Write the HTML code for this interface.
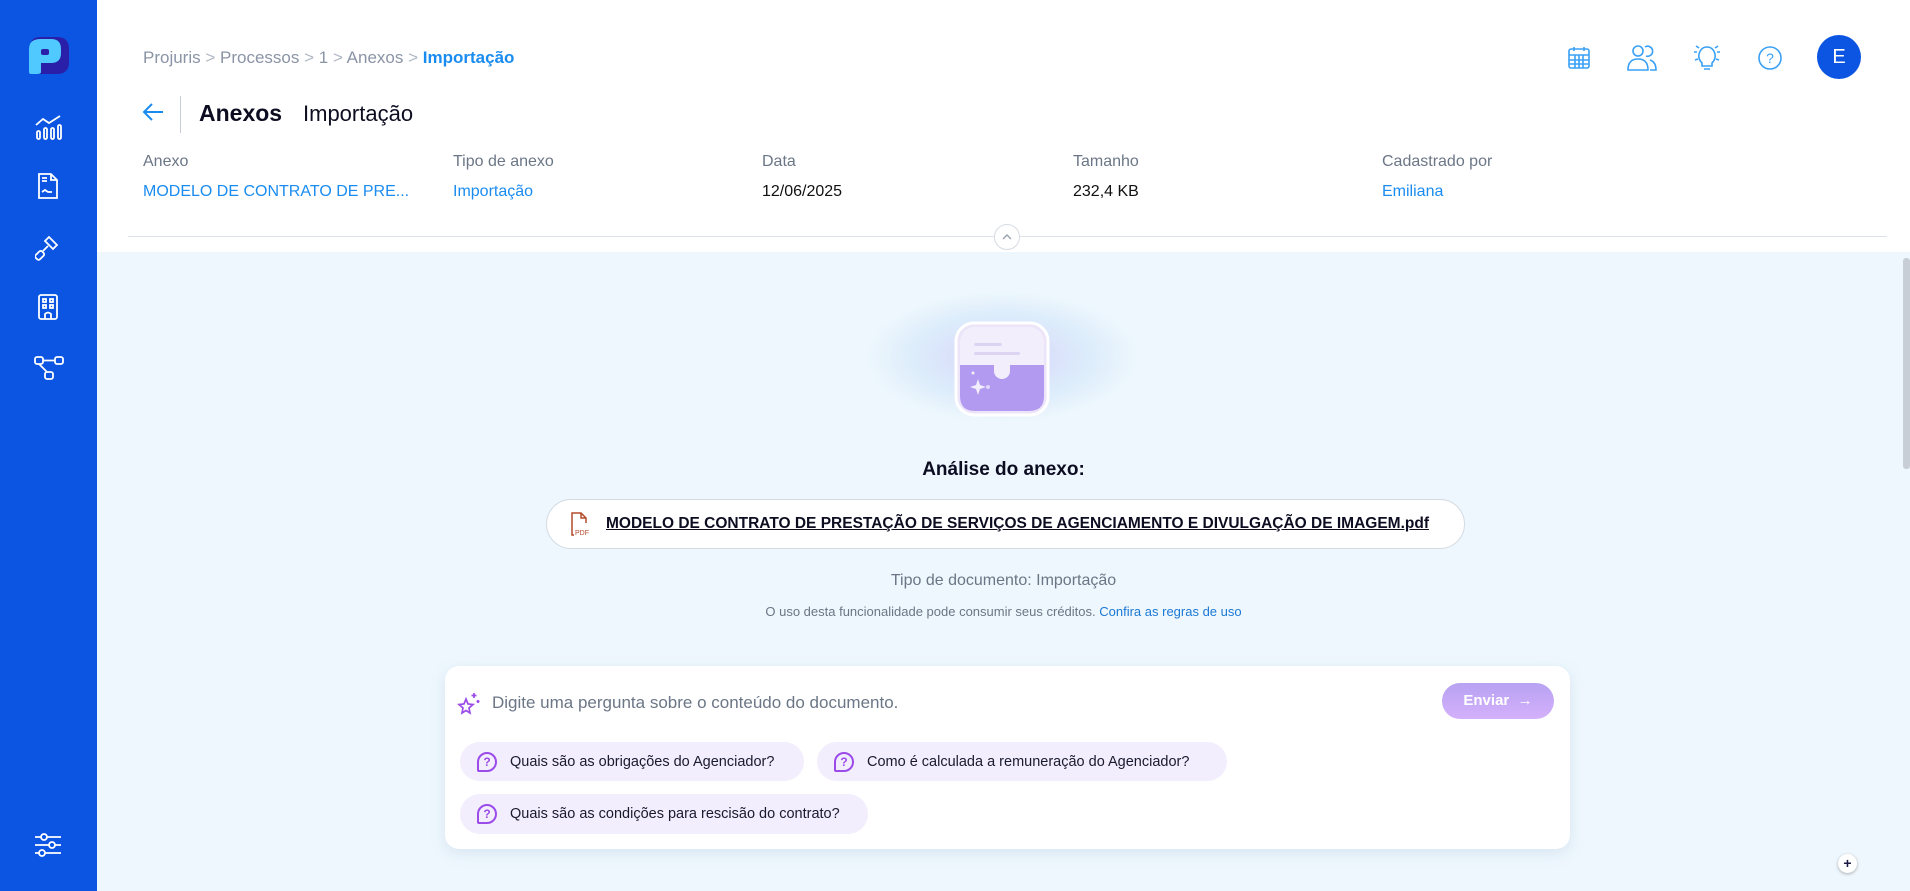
<!DOCTYPE html>
<html><head><meta charset="utf-8">
<style>
*{box-sizing:border-box;margin:0;padding:0}
body{width:1910px;height:891px;overflow:hidden;background:#fff;font-family:"Liberation Sans",sans-serif;position:relative;color:#1a1a2e}
.abs{position:absolute}
.side{left:0;top:0;width:97px;height:891px;background:#0b55e2}
.side svg{position:absolute;left:34px}
.bc{left:143px;top:48px;font-size:17px;color:#8a94a6;white-space:nowrap}
.bc b{color:#1a8cf0;font-weight:bold}
.lbl{top:153px;font-size:16px;color:#6b7686}
.val{top:183px;font-size:16px;color:#111}
.blue{color:#1a8cf0}
.main{left:97px;top:252px;width:1813px;height:639px;background:#eef7fd}
.chip{background:#f2eefd;border-radius:20px;font-size:14.5px;color:#1a1a2e;display:flex;align-items:center;padding-left:50px;white-space:nowrap}
.chip::before{content:"?";position:absolute;left:17px;top:50%;margin-top:-10px;width:16px;height:16px;border:2px solid #9b4be8;border-radius:50% 50% 50% 10%;color:#9b4be8;font-size:12px;font-weight:bold;line-height:16px;text-align:center}
</style></head><body>
<div class="abs side">
 <svg style="left:27px;top:37px" width="44" height="37" viewBox="0 0 44 37"><path d="M4 8 Q4 0 14 0 H30 Q42 0 42 12 V25 Q42 37 30 37 H4 Z" fill="#2a1fa8"/><path d="M2 35 V12 Q2 2 14 2 H24 Q34 2 34 12 V16 Q34 26 24 26 H14 V35 Q14 37 10 37 H4 Q2 37 2 35Z" fill="#4fc9ff"/><rect x="14" y="12" width="8" height="6" rx="2" fill="#2a1fa8"/></svg>
 <svg style="top:115px" width="30" height="26" viewBox="0 0 30 26" fill="none" stroke="#fff" stroke-width="1.8"><path d="M2 10 L9 4 L15 8 L26 1"/><rect x="3" y="16" width="3" height="8" rx="1.5"/><rect x="10" y="13" width="3" height="11" rx="1.5"/><rect x="17" y="13" width="3" height="11" rx="1.5"/><rect x="24" y="10" width="3" height="14" rx="1.5"/></svg>
 <svg style="top:172px;left:37px" width="22" height="28" viewBox="0 0 22 28" fill="none" stroke="#fff" stroke-width="1.8"><path d="M2 2 H14 L20 8 V26 H2 Z"/><path d="M14 2 V8 H20"/><path d="M5 6 H10 M5 9 H10 M5 20 L8 18 L11 20 L15 20"/></svg>
 <svg style="top:233px;left:35px" width="28" height="28" viewBox="0 0 28 28" fill="none" stroke="#fff" stroke-width="1.8"><path d="M14 4 L22 12 L18 16 L10 8 Z"/><path d="M13 13 L8 18"/><rect x="2" y="18" width="6" height="9" rx="2" transform="rotate(45 5 22)"/></svg>
 <svg style="top:293px;left:37px" width="22" height="28" viewBox="0 0 22 28" fill="none" stroke="#fff" stroke-width="1.8"><rect x="2" y="2" width="18" height="24" rx="2"/><rect x="6" y="6" width="3" height="3"/><rect x="13" y="6" width="3" height="3"/><rect x="6" y="12" width="3" height="3"/><rect x="13" y="12" width="3" height="3"/><path d="M8 26 V21 Q11 18 14 21 V26"/></svg>
 <svg style="top:355px" width="30" height="26" viewBox="0 0 30 26" fill="none" stroke="#fff" stroke-width="1.8"><rect x="1" y="2" width="8" height="7" rx="2"/><rect x="21" y="2" width="8" height="7" rx="2"/><rect x="11" y="17" width="8" height="7" rx="2"/><path d="M9 5.5 H21 M5 9 L13 17"/></svg>
 <svg style="top:833px" width="28" height="24" viewBox="0 0 28 24" fill="none" stroke="#fff" stroke-width="1.8"><path d="M1 4 H27 M1 12 H27 M1 20 H27"/><circle cx="10" cy="4" r="3" fill="#0b55e2"/><circle cx="18" cy="12" r="3" fill="#0b55e2"/><circle cx="8" cy="20" r="3" fill="#0b55e2"/></svg>
</div>

<div class="abs bc">Projuris <span style="color:#b0b8c4">&gt;</span> Processos <span style="color:#b0b8c4">&gt;</span> 1 <span style="color:#b0b8c4">&gt;</span> Anexos <span style="color:#b0b8c4">&gt;</span> <b>Importação</b></div>

<svg class="abs" style="left:1566px;top:45px" width="26" height="26" viewBox="0 0 26 26" fill="none" stroke="#3aa0f5" stroke-width="1.6"><rect x="3" y="4" width="20" height="19" rx="2"/><path d="M3 10 H23 M3 15 H23 M3 19 H23 M9 10 V23 M13 10 V23 M17 10 V23 M8 2 V6 M18 2 V6"/></svg>
<svg class="abs" style="left:1626px;top:44px" width="32" height="28" viewBox="0 0 32 28" fill="none" stroke="#3aa0f5" stroke-width="1.6"><circle cx="12" cy="7" r="5"/><path d="M2 26 Q2 15 12 15 Q22 15 22 26 Z"/><path d="M19 3 A5 5 0 1 1 20 12 M24 16 Q30 18 30 26 H24"/></svg>
<svg class="abs" style="left:1692px;top:43px" width="30" height="30" viewBox="0 0 30 30" fill="none" stroke="#3aa0f5" stroke-width="1.6"><path d="M10 20 Q6 16 7 11 Q9 4 15 4 Q21 4 23 11 Q24 16 20 20 V23 H10 Z"/><path d="M12 26 H18 M2 9 H5 M25 9 H28 M3 17 L6 16 M27 17 L24 16 M4 3 L7 5 M26 3 L23 5"/></svg>
<svg class="abs" style="left:1757px;top:45px" width="26" height="26" viewBox="0 0 26 26" fill="none" stroke="#3aa0f5" stroke-width="1.6"><circle cx="13" cy="13" r="11"/><text x="13" y="18" text-anchor="middle" font-size="14" fill="#3aa0f5" stroke="none" font-family="Liberation Sans">?</text></svg>
<div class="abs" style="left:1817px;top:35px;width:44px;height:44px;border-radius:50%;background:#0b55e2;color:#fff;font-size:20px;line-height:44px;text-align:center">E</div>

<svg class="abs" style="left:142px;top:102px" width="22" height="20" viewBox="0 0 22 20" fill="none" stroke="#1a8cf0" stroke-width="2"><path d="M21 10 H3 M10 2 L2 10 L10 18"/></svg>
<div class="abs" style="left:180px;top:96px;width:1px;height:37px;background:#c9ced6"></div>
<div class="abs" style="left:199px;top:100px;font-size:23px;font-weight:bold;color:#0d0d22">Anexos</div>
<div class="abs" style="left:303px;top:101px;font-size:22px;color:#0d0d22">Importação</div>

<div class="abs lbl" style="left:143px">Anexo</div>
<div class="abs lbl" style="left:453px">Tipo de anexo</div>
<div class="abs lbl" style="left:762px">Data</div>
<div class="abs lbl" style="left:1073px">Tamanho</div>
<div class="abs lbl" style="left:1382px">Cadastrado por</div>
<div class="abs val blue" style="left:143px">MODELO DE CONTRATO DE PRE...</div>
<div class="abs val blue" style="left:453px">Importação</div>
<div class="abs val" style="left:762px">12/06/2025</div>
<div class="abs val" style="left:1073px">232,4 KB</div>
<div class="abs val blue" style="left:1382px">Emiliana</div>

<div class="main abs">
 <div class="abs" style="right:0;top:6px;width:7px;height:211px;background:#c8ced6;border-radius:3px"></div>
 <div class="abs" style="left:770px;top:40px;width:270px;height:130px;border-radius:50%;background:radial-gradient(ellipse at center,#d8d2fa 0%,#dcecfb 45%,rgba(238,247,253,0) 72%)"></div>
 <svg class="abs" style="left:857px;top:69px" width="96" height="96" viewBox="0 0 96 96">
  <rect x="2" y="2" width="92" height="92" rx="18" fill="#ece4f8" stroke="#fff" stroke-width="3"/>
  <rect x="6" y="6" width="84" height="84" rx="15" fill="#f3eefc"/>
  <path d="M6 44 H90 V75 Q90 90 75 90 H21 Q6 90 6 75 Z" fill="#b29af0"/>
  <path d="M40 44 V50 A8 8 0 0 0 56 50 V44 Z" fill="#f3eefc"/>
  <rect x="20" y="22" width="28" height="3" rx="1.5" fill="#ddd3f3"/><rect x="20" y="31" width="46" height="3" rx="1.5" fill="#ddd3f3"/>
  <path d="M24 58 L26 64 L32 66 L26 68 L24 74 L22 68 L16 66 L22 64Z" fill="#f3eefc"/>
  <circle cx="19" cy="52" r="1.5" fill="#f3eefc"/><circle cx="34" cy="66" r="2" fill="#e0d6fa"/>
 </svg>
 <div class="abs" style="left:0;width:1813px;text-align:center;top:207px;font-size:19px;font-weight:bold;color:#0d0d22">Análise do anexo:</div>
 <div class="abs" style="left:449px;top:247px;width:919px;height:50px;background:#fff;border:1px solid #d3dae3;border-radius:25px"></div>
 <svg class="abs" style="left:473px;top:259px" width="22" height="26" viewBox="0 0 22 26" fill="none" stroke="#b24a2a" stroke-width="1.5"><path d="M2 22 V2 H11 L16 7 V12 M11 2 V7 H16 M2 22 V24 H4"/><text x="5" y="24" font-size="7" fill="#b24a2a" stroke="none" font-family="Liberation Sans">PDF</text></svg>
 <div class="abs" style="left:509px;top:263px;font-size:15.5px;font-weight:bold;color:#0d0d22;text-decoration:underline;white-space:nowrap">MODELO DE CONTRATO DE PRESTAÇÃO DE SERVIÇOS DE AGENCIAMENTO E DIVULGAÇÃO DE IMAGEM.pdf</div>
 <div class="abs" style="left:0;width:1813px;text-align:center;top:320px;font-size:16px;color:#6b7686">Tipo de documento: Importação</div>
 <div class="abs" style="left:0;width:1813px;text-align:center;top:352px;font-size:13px;color:#6b7686">O uso desta funcionalidade pode consumir seus créditos. <span style="color:#1a78d6">Confira as regras de uso</span></div>

 <div class="abs" style="left:348px;top:414px;width:1125px;height:183px;background:#fff;border-radius:14px;box-shadow:0 4px 14px rgba(150,180,210,.25)">
  <svg class="abs" style="left:12px;top:25px" width="24" height="24" viewBox="0 0 24 24" fill="none" stroke="#9b4be8" stroke-width="1.7"><path d="M9 8 L11 13 L16 13.5 L12 17 L13 22 L9 19.5 L5 22 L6 17 L2 13.5 L7 13Z"/><path d="M17 2 V7 M14.5 4.5 H19.5 M21 9 V12 M19.5 10.5 H22.5"/></svg>
  <div class="abs" style="left:47px;top:27px;font-size:17px;color:#6b7686">Digite uma pergunta sobre o conteúdo do documento.</div>
  <div class="abs" style="left:997px;top:17px;width:112px;height:36px;border-radius:18px;background:linear-gradient(#b7a2f2,#d4b0fb);color:#fff;font-weight:bold;font-size:15px;line-height:36px;text-align:center">Enviar &nbsp;→</div>
  <div class="abs chip" style="left:15px;top:76px;width:344px;height:39px">Quais são as obrigações do Agenciador?</div>
  <div class="abs chip" style="left:372px;top:76px;width:410px;height:39px">Como é calculada a remuneração do Agenciador?</div>
  <div class="abs chip" style="left:15px;top:128px;width:408px;height:40px">Quais são as condições para rescisão do contrato?</div>
 </div>
 <div class="abs" style="left:1741px;top:602px;width:19px;height:19px;border-radius:50%;background:#fff;box-shadow:0 1px 3px rgba(0,0,0,.3);text-align:center;line-height:19px;font-weight:bold;font-size:14px;color:#1a1a44">+</div>
</div>
<div class="abs" style="left:128px;top:236px;width:1759px;height:1px;background:#dde2e8"></div>
<div class="abs" style="left:994px;top:224px;width:26px;height:26px;border-radius:50%;background:#fff;border:1px solid #d6dbe2"><svg width="24" height="24" viewBox="0 0 24 24" fill="none" stroke="#9aa3af" stroke-width="1.4"><path d="M8 14 L12 10 L16 14"/></svg></div>
</body></html>
